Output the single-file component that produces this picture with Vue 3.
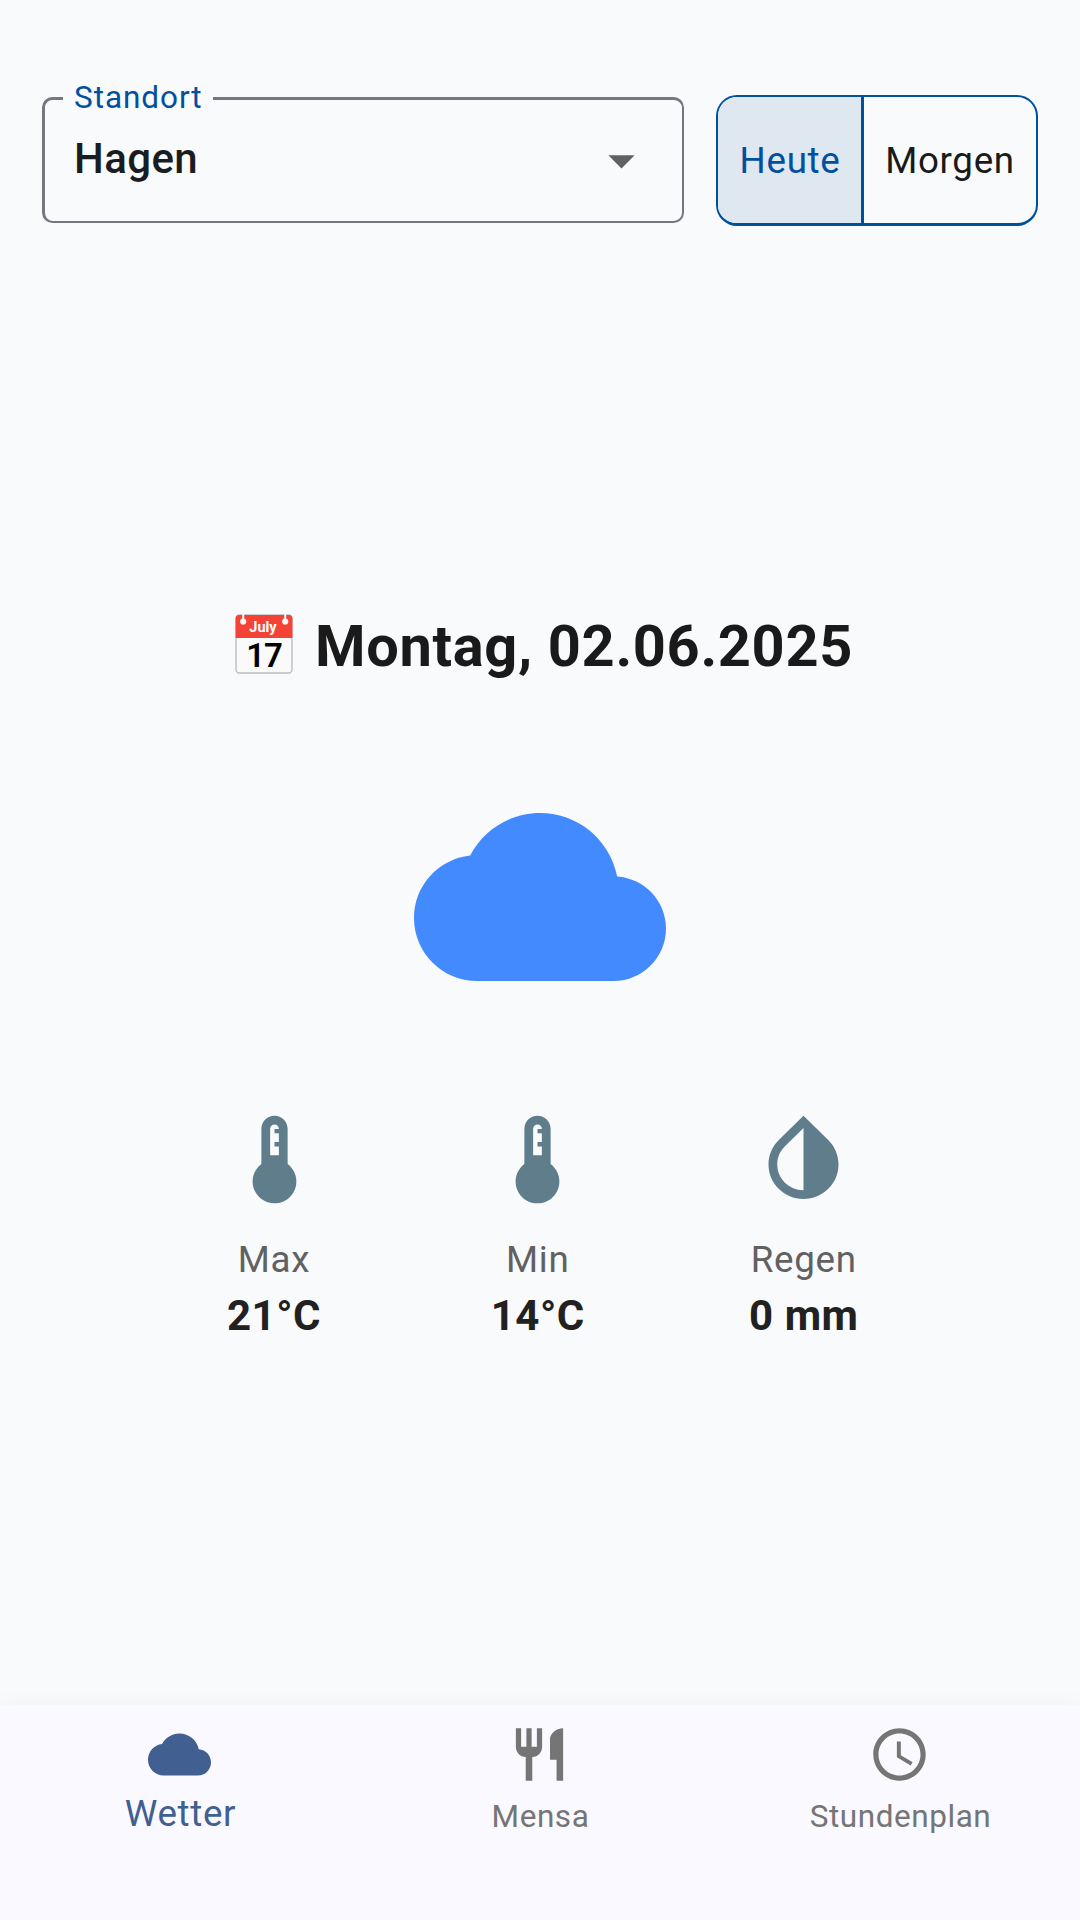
<script setup>
const cloudPath =
  'M19.35 10.04C18.67 6.59 15.64 4 12 4 9.11 4 6.6 5.64 5.35 8.04 2.34 8.36 0 10.91 0 14c0 3.31 2.69 6 6 6h13c2.76 0 5-2.24 5-5 0-2.64-2.05-4.78-4.65-4.96z'
const thermostatPath =
  'M15 13V5c0-1.66-1.34-3-3-3S9 3.34 9 5v8c-1.21.91-2 2.37-2 4 0 2.76 2.24 5 5 5s5-2.24 5-5c0-1.63-.79-3.09-2-4zm-4-8c0-.55.45-1 1-1s1 .45 1 1h-1v1h1v2h-1v1h1v2h-2V5z'
const dropPath =
  'M12 4.81V19c-3.31 0-6-2.63-6-5.87 0-1.56.62-3.03 1.75-4.14L12 4.81M6.35 7.56C4.9 8.99 4 10.96 4 13.13 4 17.48 7.58 21 12 21s8-3.52 8-7.87c0-2.17-.9-4.14-2.35-5.57L12 2 6.35 7.56z'
const restaurantPath =
  'M11 9H9V2H7v7H5V2H3v7c0 2.12 1.66 3.84 3.75 3.97V22h2.5v-9.03C11.34 12.84 13 11.12 13 9V2h-2v7zm5-3v8h2.5v8H21V2c-2.76 0-5 2.24-5 4z'
const clockPath =
  'M11.99 2C6.47 2 2 6.48 2 12s4.47 10 9.99 10C17.52 22 22 17.52 22 12S17.52 2 11.99 2zM12 20c-4.42 0-8-3.58-8-8s3.58-8 8-8 8 3.58 8 8-3.58 8-8 8zm.5-13H11v6l5.25 3.15.75-1.23-4.5-2.67z'

const stats = [
  { label: 'Max', value: '21°C', icon: thermostatPath },
  { label: 'Min', value: '14°C', icon: thermostatPath },
  { label: 'Regen', value: '0 mm', icon: dropPath },
]
const tabs = [
  { label: 'Wetter', icon: cloudPath, active: true },
  { label: 'Mensa', icon: restaurantPath, active: false },
  { label: 'Stundenplan', icon: clockPath, active: false },
]
</script>

<template>
  <div class="screen">
    <header class="top">
      <div class="select">
        <span class="select-label">Standort</span>
        <span class="select-value">Hagen</span>
        <svg class="caret" viewBox="0 0 24 24"><path d="M7 10l5 5 5-5z" /></svg>
      </div>
      <div class="toggle">
        <button class="seg on">Heute</button>
        <button class="seg">Morgen</button>
      </div>
    </header>

    <main class="weather">
      <h1 class="date">
        <svg class="calendar" viewBox="0 0 58 60">
          <rect x="1" y="1" width="56" height="58" rx="3.5" fill="#fafafa" stroke="#bdbdbd" stroke-width="1.4" />
          <path d="M.6 24V4.500Q.6 1 4 1H54Q57.400 1 57.400 4.500V24z" fill="#f44336" />
          <path d="M7.200 0h2v5h-2zM49.200 0h2v5h-2z" fill="#fafafa" />
          <circle cx="8.200" cy="7.500" r="3.100" fill="#fafafa" />
          <circle cx="50.200" cy="7.500" r="3.100" fill="#fafafa" />
          <text x="28" y="17.500" class="cal-month">July</text>
          <text x="29" y="53" class="cal-day">17</text>
        </svg>
        <span>Montag, 02.06.2025</span>
      </h1>
      <svg class="condition" viewBox="0 0 24 24"><path :d="cloudPath" /></svg>
      <div class="stats">
        <div v-for="s in stats" :key="s.label" class="stat">
          <svg class="stat-icon" viewBox="0 0 24 24"><path :d="s.icon" /></svg>
          <span class="stat-label">{{ s.label }}</span>
          <strong class="stat-value">{{ s.value }}</strong>
        </div>
      </div>
    </main>

    <nav class="nav">
      <div v-for="t in tabs" :key="t.label" class="tab" :class="{ active: t.active }">
        <svg class="tab-icon" viewBox="0 0 24 24"><path :d="t.icon" /></svg>
        <span class="tab-label">{{ t.label }}</span>
      </div>
    </nav>
  </div>
</template>

<style>
body {
  margin: 0;
  background: #f8fafc;
}
</style>

<style scoped>
.screen {
  box-sizing: border-box;
  width: 1080px;
  height: 1920px;
  display: flex;
  flex-direction: column;
  overflow: hidden;
  background: #f8fafc;
  font-family: Roboto, "Noto Sans", sans-serif;
  color: #1a1a1a;
}
svg {
  display: block;
  fill: currentColor;
  flex: none;
}
.top {
  display: flex;
  justify-content: space-between;
  align-items: flex-start;
  height: 131px;
  padding: 95px 42px 0;
}
.select {
  position: relative;
  box-sizing: border-box;
  display: flex;
  align-items: center;
  justify-content: space-between;
  width: 642px;
  height: 126px;
  margin-top: 2px;
  padding: 0 29px 4px 29px;
  border: 2px solid #777680;
  border-top-width: 3px;
  border-left-width: 3px;
  border-radius: 10.5px;
}
.select-label {
  position: absolute;
  left: 18px;
  top: -22px;
  box-sizing: border-box;
  width: 150px;
  padding-left: 11px;
  background: #f8fafc;
  color: #00509e;
  font-size: 31.5px;
  line-height: 40px;
  letter-spacing: 0.95px;
}
.select-value {
  font-size: 42px;
  font-weight: 500;
  line-height: 56px;
  letter-spacing: 0.4px;
  color: #191c20;
}
.caret {
  width: 63px;
  height: 63px;
  margin-top: 4px;
  color: #616161;
}
.toggle {
  box-sizing: border-box;
  display: flex;
  width: 322px;
  height: 131px;
  border: 2px solid #00509e;
  border-bottom-width: 3px;
  border-radius: 21px;
  overflow: hidden;
}
.seg {
  flex: 1;
  padding: 1px 0 0;
  border: 0;
  background: transparent;
  font: 400 36.75px/50px Roboto, "Noto Sans", sans-serif;
  letter-spacing: 0.66px;
  color: #1a1a1a;
}
.seg.on {
  flex: 0 0 146px;
  padding-left: 1px;
  border-right: 3px solid #00509e;
  background: #dfe7f1;
  color: #00509e;
}
.weather {
  flex: 1;
  display: flex;
  flex-direction: column;
  align-items: center;
}
.date {
  display: flex;
  align-items: center;
  gap: 22.5px;
  height: 76px;
  margin: 382px 0 0 7.5px;
  font-size: 57.75px;
  font-weight: 700;
  line-height: 76px;
  letter-spacing: 0.66px;
  white-space: nowrap;
}
.calendar {
  width: 58px;
  height: 60px;
  margin-top: -5px;
}
.cal-month {
  font-size: 14.5px;
  font-weight: 700;
  letter-spacing: 0;
  fill: #fff;
  text-anchor: middle;
}
.cal-day {
  font-size: 33px;
  font-weight: 600;
  letter-spacing: -1px;
  fill: #000;
  text-anchor: middle;
}
.condition {
  width: 252px;
  height: 252px;
  margin-top: 87px;
  color: #448aff;
}
.stats {
  display: flex;
  justify-content: space-between;
  width: 637px;
  margin-top: 84px;
}
.stat {
  display: flex;
  flex-direction: column;
  align-items: center;
}
.stat-icon {
  width: 105px;
  height: 105px;
  color: #607d8b;
}
.stat-label {
  margin-top: 22px;
  font-size: 36.75px;
  line-height: 52px;
  letter-spacing: 0.66px;
  color: #616161;
}
.stat-value {
  font-size: 42px;
  line-height: 60px;
  letter-spacing: 0.55px;
  color: #212121;
}
.nav {
  box-sizing: border-box;
  display: flex;
  height: 215px;
  padding-top: 18px;
  background: #f9f9ff;
  box-shadow: 0 0 21px rgba(0, 0, 0, 0.04);
}
.tab {
  flex: 1;
  display: flex;
  flex-direction: column;
  align-items: center;
  color: #757575;
}
.tab-icon {
  width: 63px;
  height: 63px;
  margin-right: 0.2px;
}
.tab-label {
  margin-top: 9px;
  padding-left: 1px;
  font-size: 31.5px;
  line-height: 44px;
  letter-spacing: 0.56px;
}
.tab.active {
  color: #415f91;
}
.tab.active .tab-label {
  margin-top: 6px;
  font-size: 36.75px;
  letter-spacing: 0.66px;
}
</style>
